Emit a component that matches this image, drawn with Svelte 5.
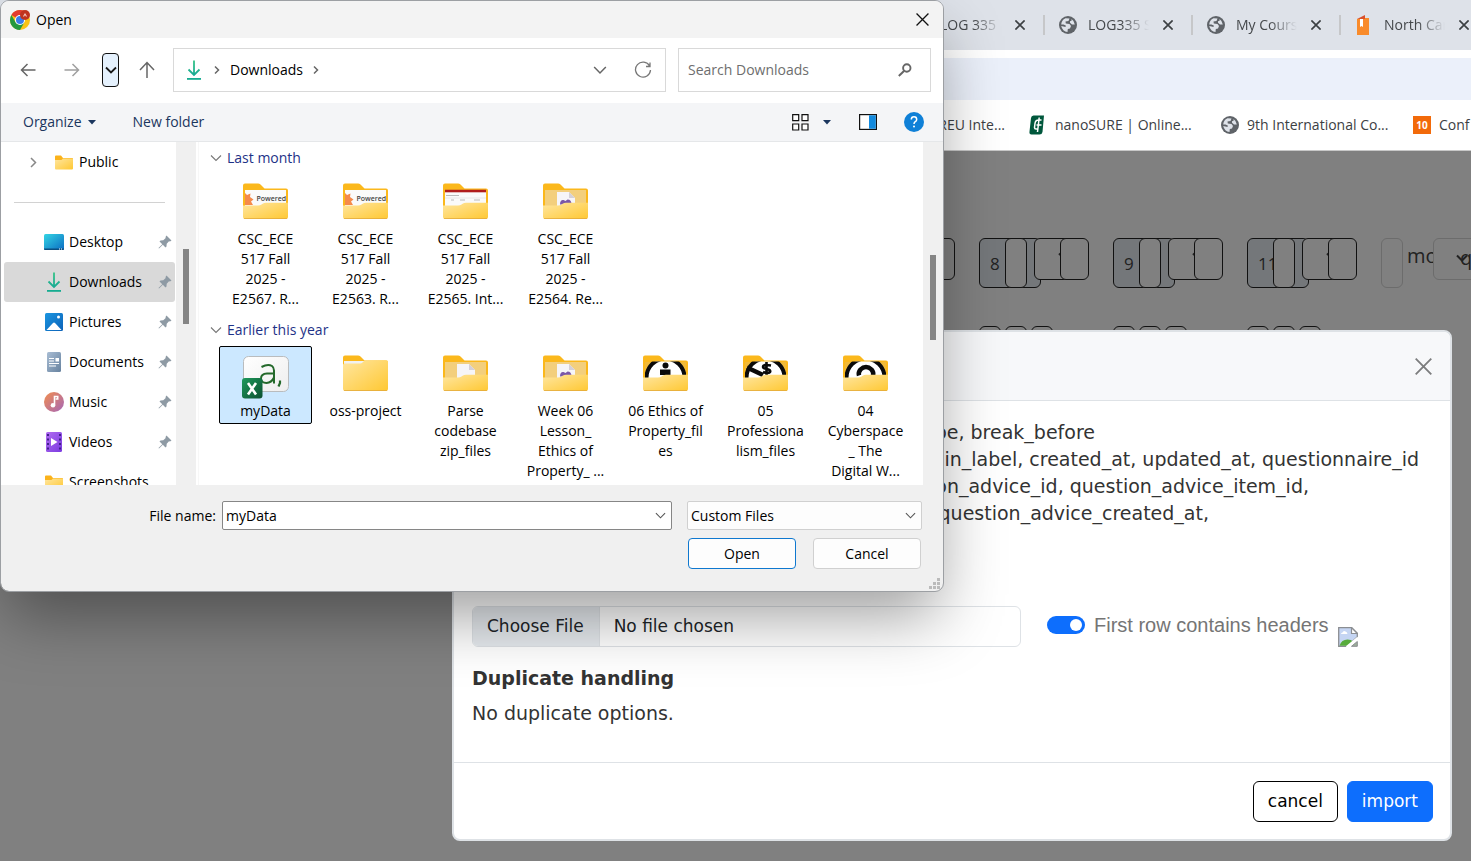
<script>
  const tabs = [
    { icon: '', title: 'LOG 335' },
    { icon: 'globe', title: 'LOG335 S' },
    { icon: 'globe', title: 'My Cours' },
    { icon: 'door', title: 'North Car' },
  ];

  const bookmarks = [
    { icon: '', title: 'REU Inte...' },
    { icon: 'leaf', title: 'nanoSURE | Online...' },
    { icon: 'globe', title: '9th International Co...' },
    { icon: 'ten', title: 'Conf' },
  ];

  const slots = ['', '8', '9', '11'];

  const places = [
    { icon: 'desktop', name: 'Desktop' },
    { icon: 'download', name: 'Downloads', current: true },
    { icon: 'pictures', name: 'Pictures' },
    { icon: 'documents', name: 'Documents' },
    { icon: 'music', name: 'Music' },
    { icon: 'videos', name: 'Videos' },
  ];

  const groups = [
    {
      title: 'Last month',
      files: [
        { kind: 'powered', lines: ['CSC_ECE', '517 Fall', '2025 -', 'E2567. R...'] },
        { kind: 'powered', lines: ['CSC_ECE', '517 Fall', '2025 -', 'E2563. R...'] },
        { kind: 'page', lines: ['CSC_ECE', '517 Fall', '2025 -', 'E2565. Int...'] },
        { kind: 'purple', lines: ['CSC_ECE', '517 Fall', '2025 -', 'E2564. Re...'] },
      ],
    },
    {
      title: 'Earlier this year',
      files: [
        { kind: 'csv', lines: ['myData'], selected: true },
        { kind: 'plain', lines: ['oss-project'] },
        { kind: 'sheet', lines: ['Parse', 'codebase', 'zip_files'] },
        { kind: 'purple', lines: ['Week 06', 'Lesson_', 'Ethics of', 'Property_ ...'] },
        { kind: 'person', lines: ['06 Ethics of', 'Property_fil', 'es'] },
        { kind: 'dollar', lines: ['05', 'Professiona', 'lism_files'] },
        { kind: 'arc', lines: ['04', 'Cyberspace', '_ The', 'Digital W...'] },
      ],
    },
  ];

  let fileName = $state('myData');
  let headers = $state(true);
</script>

{#snippet globe()}
  <svg width="18" height="18" viewBox="0 0 18 18" aria-hidden="true">
    <circle cx="9" cy="9" r="9" fill="#5f6368" />
    <path d="M2.200 8.500Q2.500 4 6.500 2.300L10.500 2.500 9.500 5 6.500 5.500 6.800 7.500 10.500 8 12 10 11 12.500 8.800 13 8.500 16Q3.500 15.500 2.200 10L6.500 11 6.800 9.500 4.500 8.500ZM12.500 3Q15.500 5 15.800 8.600L13 8.500 11 6.800 11 5.300 12.600 4.800Z" fill="#dee2e9" />
  </svg>
{/snippet}

{#snippet favicon(name)}
  {#if name === 'globe'}
    {@render globe()}
  {:else if name === 'door'}
    <svg width="18" height="22" viewBox="0 0 18 22" aria-hidden="true">
      <path d="M2 5 10 1v4z" fill="#d9512c" />
      <path d="M2 5h8V4h4v17H2z" fill="#f98b2b" />
      <path d="M5 5h3v8l-1.500-1L5 13z" fill="#fff" />
    </svg>
  {:else if name === 'leaf'}
    <svg width="18" height="20" viewBox="0 0 18 20" aria-hidden="true">
      <path d="M4.500.5H15L13.500 17Q13 19.500 10.500 19.500H2.500Q0 19.500.5 16.500L2 3Q2.300.5 4.500.5z" fill="#00573c" />
      <path d="M12.500 5H9.500Q6.500 5 6 8.500L5.500 12.500Q5.500 14 7 14H9.500M10.200 2.500 8.500 17M7.500 10H12.500" fill="none" stroke="#fff" stroke-width="1.500" />
    </svg>
  {:else if name === 'ten'}
    <svg width="18" height="18" viewBox="0 0 18 18" aria-hidden="true">
      <rect width="18" height="18" fill="#f26a0a" />
      <text x="9" y="13" text-anchor="middle" font-family="Open Sans, sans-serif" font-size="10" font-weight="700" fill="#fff">10</text>
    </svg>
  {/if}
{/snippet}

{#snippet chevron(size, color, width)}
  <svg width={size} height={size} viewBox="0 0 12 12" aria-hidden="true">
    <path d="M1 3.500 6 8.500 11 3.500" fill="none" stroke={color} stroke-width={width} />
  </svg>
{/snippet}

{#snippet crumb()}
  <svg width="6" height="10" viewBox="0 0 6 10" aria-hidden="true">
    <path d="M1 1.500 4.500 5 1 8.500" fill="none" stroke="#666" stroke-width="1.500" />
  </svg>
{/snippet}

{#snippet cross(size, color, width)}
  <svg width={size} height={size} viewBox="0 0 12 12" aria-hidden="true">
    <path d="M.5.5 11.500 11.500M11.500.5.5 11.500" stroke={color} stroke-width={width} />
  </svg>
{/snippet}

{#snippet place(name)}
  {#if name === 'desktop'}
    <svg width="20" height="20" viewBox="0 0 20 20" aria-hidden="true">
      <rect y="2" width="20" height="16" rx="1.500" fill="url(#desk)" />
      <path d="M0 16.500h20V17q0 1-1 1H1q-1 0-1-1z" fill="#0a4e80" />
      <path d="M15 17h1M17 17h1" stroke="#fff" />
    </svg>
  {:else if name === 'download'}
    <svg width="20" height="20" viewBox="0 0 20 20" aria-hidden="true">
      <path d="M10 .5v14M4.500 9.500l5.500 5.500 5.500-5.500" fill="none" stroke="url(#down)" stroke-width="1.800" />
      <rect x="3" y="18" width="14" height="1.800" fill="#17ac91" />
    </svg>
  {:else if name === 'pictures'}
    <svg width="20" height="20" viewBox="0 0 20 20" aria-hidden="true">
      <rect x="1" y="1" width="18" height="18" rx="1.500" fill="url(#pic)" />
      <path d="M2.500 18 9 11q1-1 2 0l6.500 7z" fill="#fff" />
      <circle cx="14.500" cy="5" r="1.500" fill="#fff" />
    </svg>
  {:else if name === 'documents'}
    <svg width="20" height="20" viewBox="0 0 20 20" aria-hidden="true">
      <rect x="3" width="14" height="20" rx="1.500" fill="url(#docs)" />
      <path d="M5 6.500h5M5 9h5M5 11.500h10M5 14h7" stroke="#fff" stroke-width="1.200" />
      <rect x="11.500" y="6" width="3.500" height="3.500" fill="#fff" />
    </svg>
  {:else if name === 'music'}
    <svg width="20" height="20" viewBox="0 0 20 20" aria-hidden="true">
      <circle cx="10" cy="10" r="10" fill="url(#music)" />
      <circle cx="9" cy="13.200" r="2.300" fill="#fff" />
      <path d="M10.500 13V4.500h3.200V7h-2" fill="none" stroke="#fff" stroke-width="1.600" />
    </svg>
  {:else if name === 'videos'}
    <svg width="20" height="20" viewBox="0 0 20 20" aria-hidden="true">
      <rect x="2" width="16" height="20" rx="1.500" fill="url(#video)" />
      <path d="M4 2v17M16 2v17" stroke="#43208c" stroke-width="2" stroke-dasharray="2 2.500" />
      <path d="M7 6v8l6.500-4z" fill="#fff" />
    </svg>
  {/if}
{/snippet}

{#snippet smallFolder()}
  <svg width="18" height="15" viewBox="0 0 18 15" aria-hidden="true">
    <path d="M0 1.500Q0 .5 1 .5h5l2 2.500h9q1 0 1 1v3H0z" fill="#fbb31b" />
    <path d="M0 5h6.500L8 3.500h9q1 0 1 1V13.500q0 1-1 1H1q-1 0-1-1z" fill="url(#front)" />
  </svg>
{/snippet}

{#snippet fileIcon(kind)}
  {#if kind === 'csv'}
    <svg class="csv" width="48" height="44" viewBox="0 0 48 44" aria-hidden="true">
      <rect x="1.500" y="1.500" width="45" height="35" rx="5" fill="url(#paper)" stroke="#b9bcbe" />
      <path d="M19.500 12Q26 8.500 30 11 32 12.500 32 15.500V28.500M32 18.500H25q-6 .3-6 5 .3 4.500 5.500 4.500 5-.3 7.500-5.500" fill="none" stroke="#24692b" stroke-width="2" />
      <path d="M38 25.500v2.500l-1.500 3.500" fill="none" stroke="#24692b" stroke-width="2.200" />
      <rect x="0" y="23" width="20.500" height="20.500" rx="3" fill="url(#excel)" />
      <path d="M6 28 14 39.500M14 28 6 39.500" stroke="#fff" stroke-width="2.600" />
    </svg>
  {:else if kind === 'plain'}
    <svg width="46" height="36" viewBox="0 0 46 36" aria-hidden="true">
      <path d="M0 2.500Q0 .5 2 .5h13q1.500 0 2.500 1l4 4H43q2 0 2 2V12H0z" fill="#fbb81c" />
      <path d="M1 6h20v4H1z" fill="#f1f1f1" />
      <path d="M0 10q0-1.500 1.500-1.500H17q1.500 0 2.500-1L21 6q.7-.7 2-.7H43.500q1.500 0 1.500 1.500V34q0 2-2 2H2q-2 0-2-2z" fill="url(#front)" />
      <path d="M1 35.600h43" stroke="#dfa63a" stroke-width=".8" />
    </svg>
  {:else}
    <svg width="46" height="36" viewBox="0 0 46 36" aria-hidden="true">
      <path d="M0 2.500Q0 .5 2 .5h13q1.500 0 2.500 1l4 4H43q2 0 2 2V30H0z" fill="#fbb81c" />
      <g clip-path="url(#window)">
        {#if kind === 'powered'}
          <rect x="2" y="7" width="41" height="18" fill="#fafafa" />
          <path d="M2 10l2 2 3.500-1.500L7 14l3.500 2.500L8 18.500 10 22H2z" fill="#f58a4b" />
          <text x="13.500" y="18" font-family="Open Sans, sans-serif" font-size="7" font-weight="600" fill="#444">Powered</text>
        {:else if kind === 'page'}
          <rect x="2" y="7" width="41" height="18" fill="#fafafa" />
          <rect x="2" y="6.500" width="41" height="2.800" fill="#b01c1c" />
          <path d="M3 12.500h13M8 17h3M17 17h5M31 17h6" stroke="#aaa" stroke-width=".8" />
          <path d="M2 15h41" stroke="#ddd" stroke-width=".6" />
        {:else if kind === 'purple' || kind === 'sheet'}
          <rect x="2" y="7" width="41" height="18" fill="#f3cf7d" />
          <path d="M14 9h12l6 6v12H14z" fill="#f6f5f8" />
          <path d="M26 9v6h6z" fill="#d4d0d8" />
          {#if kind === 'purple'}
            <path d="M17 21.500Q17 16.500 20.500 17L22.500 18 24.500 16.500Q28.500 16.500 28.500 21.500z" fill="#7b57a8" />
          {/if}
        {:else}
          <rect x="2" y="7" width="41" height="18" fill="#f0b93a" />
          <circle cx="22.500" cy="22.500" r="19" fill="#fff" stroke="#0a0a0a" stroke-width="4" />
          {#if kind === 'person'}
            <circle cx="22.500" cy="10.500" r="3" fill="#0a0a0a" />
            <path d="M17 14.500h10.500v8h-4.500v-2.500H17z" fill="#0a0a0a" />
          {:else if kind === 'dollar'}
            <path d="M4 12.500 20 20" fill="none" stroke="#0a0a0a" stroke-width="4.500" />
            <path d="M23.500 7v14M28 10.500q-8-1.500-8 1.500 0 1.500 4 2 4 1 3 3-2 2-7 0" fill="none" stroke="#0a0a0a" stroke-width="2.600" />
          {:else}
            <path d="M16 20.500q-1-3 1.500-6 2.500-2.500 5.500-2.500t5.500 2.500q2.500 3 1.500 6" fill="none" stroke="#0a0a0a" stroke-width="4.500" />
          {/if}
        {/if}
      </g>
      <path d="M0 22.500h15q2 0 3.500-1l1.500-1q1-.8 3-.8H45V34q0 2-2 2H2q-2 0-2-2z" fill="url(#front)" />
      <path d="M1 35.600h43" stroke="#dfa63a" stroke-width=".8" />
    </svg>
  {/if}
{/snippet}

<svg class="defs" width="0" height="0" aria-hidden="true">
  <defs>
    <linearGradient id="front" x1="0" y1="0" x2="1" y2="1"><stop offset="0" stop-color="#ffe6a0" /><stop offset="1" stop-color="#ffc832" /></linearGradient>
    <linearGradient id="desk" x1="0" y1="0" x2="1" y2="1"><stop offset="0" stop-color="#34d5e4" /><stop offset="1" stop-color="#0b6cc2" /></linearGradient>
    <linearGradient id="down" gradientUnits="userSpaceOnUse" x1="0" y1="0" x2="0" y2="18"><stop offset="0" stop-color="#36c486" /><stop offset="1" stop-color="#12a596" /></linearGradient>
    <linearGradient id="pic" x1="0" y1="0" x2="1" y2="1"><stop offset="0" stop-color="#1b95e0" /><stop offset="1" stop-color="#0c62b8" /></linearGradient>
    <linearGradient id="docs" x1="0" y1="0" x2="1" y2="1"><stop offset="0" stop-color="#a9bdd4" /><stop offset="1" stop-color="#67829f" /></linearGradient>
    <linearGradient id="music" x1="0" y1="0" x2="1" y2="1"><stop offset="0" stop-color="#f28e4e" /><stop offset="1" stop-color="#a566b8" /></linearGradient>
    <linearGradient id="video" x1="0" y1="0" x2="1" y2="1"><stop offset="0" stop-color="#b06cf0" /><stop offset="1" stop-color="#7b3be0" /></linearGradient>
    <linearGradient id="paper" x1="0" y1="0" x2="1" y2="1"><stop offset="0" stop-color="#fff" /><stop offset="1" stop-color="#eeeeee" /></linearGradient>
    <linearGradient id="excel" x1="0" y1="0" x2="1" y2="1"><stop offset="0" stop-color="#1e9a5c" /><stop offset="1" stop-color="#0c5030" /></linearGradient>
    <clipPath id="window"><rect x="2" y="6.500" width="41" height="18" /></clipPath>
  </defs>
</svg>

<main class="desktop">
  <div class="browser">
    <div class="tabs">
      {#each tabs as tab}
        <div class="tab">
          <span class="favicon">{@render favicon(tab.icon)}</span>
          <span class="tab-title">{tab.title}</span>
          <button class="bare" aria-label="Close tab">{@render cross(10, '#3c4043', 2)}</button>
        </div>
      {/each}
    </div>
    <div class="address"></div>
    <nav class="bookmarks">
      {#each bookmarks as mark}
        <a class="bookmark" class:end={!mark.icon} href="#top">
          {@render favicon(mark.icon)}
          <span>{mark.title}</span>
        </a>
      {/each}
    </nav>
    <div class="page">
      <div class="slots">
        {#each slots as slot}
          <div class="slot">
            <span class="box number">{slot}</span>
            <span class="box narrow"></span>
            <span class="box pick">{@render chevron(12, '#222', 2)}</span>
            <span class="box last"></span>
          </div>
        {/each}
        <div class="slot faint">
          <span class="box lone"></span>
          <span class="word">mo</span>
          <span class="box wide">{@render chevron(12, '#222', 2)}<span>q</span></span>
        </div>
      </div>
      <div class="slots">
        {#each slots as slot}
          <div class="slot low">
            <span class="box small"></span>
            <span class="box small"></span>
            <span class="box small"></span>
          </div>
        {/each}
      </div>
    </div>
  </div>

  <section class="modal" role="dialog" aria-label="import">
    <header class="modal-head">
      <button class="bare" aria-label="Close">{@render cross(17, '#7c7d7e', 1.3)}</button>
    </header>
    <div class="modal-body">
      <div class="fields">
        <p class="field-a">type, break_before</p>
        <p class="field-b">min_label, created_at, updated_at, questionnaire_id</p>
        <p class="field-c">question_advice_id, question_advice_item_id,</p>
        <p class="field-d">question_advice_created_at,</p>
      </div>
      <div class="upload">
        <input class="file" type="file" aria-label="Choose File" />
        <label class="switch">
          <input type="checkbox" bind:checked={headers} />
          <span>First row contains headers</span>
        </label>
        <svg class="broken" width="20" height="20" viewBox="0 0 20 20" aria-hidden="true">
          <path d="M.7.7h13l5.600 5.600V10L9 19.300H.7z" fill="#c5d5f3" stroke="#8b8e92" stroke-width="1.300" />
          <path d="M13.500 .7V6.500h5.800z" fill="#fff" stroke="#8b8e92" stroke-width="1.200" />
          <path d="M3 7q0-1.500 1.500-1.500Q5.500 3 7.500 4.500 9 4.500 9.500 7z" fill="#fff" />
          <path d="M1.500 18.700q2-6.200 8-6.200 4 0 5.500 2L9 18.700z" fill="#57ab3b" />
          <path d="M8.500 20 20 10.500" stroke="#fff" stroke-width="2" />
          <path d="M13.500 19.300 19.300 14.500v4.800z" fill="#9cae9a" stroke="#8b8e92" />
        </svg>
      </div>
      <h2>Duplicate handling</h2>
      <p>No duplicate options.</p>
    </div>
    <footer class="modal-foot">
      <button class="btn">cancel</button>
      <button class="btn primary">import</button>
    </footer>
  </section>

  <section class="dialog" role="dialog" aria-label="Open">
    <header class="title">
      <svg width="20" height="20" viewBox="0 0 20 20" aria-hidden="true">
        <circle cx="10" cy="10" r="10" fill="#f9c315" />
        <path d="M10 10 1.340 5A10 10 0 0 1 18.660 5z" fill="#e33b2e" />
        <path d="M10 10 5.700 12.500 1.340 5A10 10 0 0 0 10 20L14.300 12.500z" fill="#25993f" />
        <circle cx="10" cy="10" r="5" fill="#fff" />
        <circle cx="10" cy="10" r="4" fill="#3b7de8" />
        <circle cx="15" cy="5" r="5" fill="#c0341d" />
        <path d="M13.500 6.500 15 4l1.500 2.500" fill="none" stroke="#f3c9c2" stroke-width="1.100" />
      </svg>
      <span>Open</span>
      <button class="bare" aria-label="Close">{@render cross(13, '#111', 1.2)}</button>
    </header>

    <div class="nav">
      <button class="bare" aria-label="Back">
        <svg width="16" height="16" viewBox="0 0 16 16"><path d="M15.500 8H1.500M7.500 2 1.500 8l6 6" fill="none" stroke="#666" stroke-width="1.500" /></svg>
      </button>
      <button class="bare" aria-label="Forward">
        <svg width="16" height="16" viewBox="0 0 16 16"><path d="M.5 8h14M8.500 2l6 6-6 6" fill="none" stroke="#a0a0a0" stroke-width="1.500" /></svg>
      </button>
      <button class="recent" aria-label="Recent locations">{@render chevron(12, '#1a1a1a', 1.8)}</button>
      <button class="bare up" aria-label="Up">
        <svg width="16" height="18" viewBox="0 0 16 18"><path d="M8 17V2M1 9l7-7.500L15 9" fill="none" stroke="#666" stroke-width="1.500" /></svg>
      </button>
      <div class="path">
        {@render place('download')}
        {@render crumb()}
        <span>Downloads</span>
        {@render crumb()}
        <span class="fill"></span>
        <button class="bare" aria-label="Previous locations">{@render chevron(14, '#666', 1.3)}</button>
        <button class="bare refresh" aria-label="Refresh">
          <svg width="18" height="18" viewBox="0 0 18 18"><path d="M15.600 5A7.500 7.500 0 1 0 16.500 9M16 1.500V5.500H12" fill="none" stroke="#777" stroke-width="1.300" /></svg>
        </button>
      </div>
      <div class="search">
        <input type="search" placeholder="Search Downloads" aria-label="Search Downloads" />
        <svg width="14" height="14" viewBox="0 0 14 14" aria-hidden="true"><circle cx="8.800" cy="5" r="3.700" fill="none" stroke="#666" stroke-width="1.900" /><path d="M6 8 .8 13" stroke="#666" stroke-width="2" /></svg>
      </div>
    </div>

    <div class="tools">
      <button class="bare organize">Organize <svg width="8" height="5" viewBox="0 0 8 5" aria-hidden="true"><path d="M0 0h8L4 4.500z" fill="#1b365e" /></svg></button>
      <button class="bare">New folder</button>
      <span class="fill"></span>
      <button class="bare" aria-label="View">
        <svg width="17" height="17" viewBox="0 0 17 17"><path d="M.7.7h6v6h-6zM10 .7h6v6h-6zM.7 10h6v6h-6zM10 10h6v6h-6z" fill="#fff" stroke="#111" stroke-width="1.200" /></svg>
      </button>
      <button class="bare arrow" aria-label="View options"><svg width="8" height="5" viewBox="0 0 8 5"><path d="M0 0h8L4 4.500z" fill="#1b365e" /></svg></button>
      <button class="bare pane" aria-label="Preview pane">
        <svg width="18" height="16" viewBox="0 0 18 16"><rect x=".6" y=".6" width="16.800" height="14.800" fill="#fff" stroke="#111" stroke-width="1.200" /><path d="M10 1.200h6.800v13.600H10z" fill="#128ade" /></svg>
      </button>
      <button class="bare" aria-label="Help">
        <svg width="20" height="20" viewBox="0 0 20 20"><circle cx="10" cy="10" r="10" fill="#0f80d7" /><path d="M7.300 7.500Q7.300 4.800 10 4.800T12.700 7.400Q12.700 8.800 11 9.800 10 10.500 10 12" fill="none" stroke="#fff" stroke-width="1.500" /><circle cx="10" cy="14.500" r="1" fill="#fff" /></svg>
      </button>
    </div>

    <div class="content">
      <div class="side">
        <div class="side-row tree">
          <svg width="7" height="11" viewBox="0 0 7 11" aria-hidden="true"><path d="M1 1 5.500 5.500 1 10" fill="none" stroke="#888" stroke-width="1.500" /></svg>
          {@render smallFolder()}
          <span>Public</span>
        </div>
        <div class="side-row divider"><hr /></div>
        {#each places as item}
          <div class="side-row" class:current={item.current}>
            {@render place(item.icon)}
            <span class="fill">{item.name}</span>
            <svg width="14" height="14" viewBox="0 0 14 14" aria-hidden="true"><path d="M8.500.5 13.500 5.500 12 6.500 11 6.300 8.700 8.700 8.500 11.500 7.500 12.500 4.800 9.700 1 13.500.5 13 4.300 9.200 1.500 6.500 2.500 5.500 5.300 5.300 7.700 3 7.500 2z" fill="#8e9aa4" /></svg>
          </div>
        {/each}
        <div class="side-row shots">{@render smallFolder()}<span>Screenshots</span></div>
      </div>
      <div class="bar side-bar"><span></span></div>
      <div class="files">
        {#each groups as group}
          <h3>{@render chevron(12, '#777', 1.1)}{group.title}</h3>
          <div class="grid">
            {#each group.files as file}
              <button class="tile" class:selected={file.selected}>
                <span class="pic">{@render fileIcon(file.kind)}</span>
                {#each file.lines as line}<span class="line">{line}</span>{/each}
              </button>
            {/each}
          </div>
        {/each}
      </div>
      <div class="bar file-bar"><span></span></div>
    </div>

    <footer class="foot">
      <div class="name">
        <label for="file-name">File name:</label>
        <div class="combo">
          <input id="file-name" bind:value={fileName} />
          {@render chevron(11, '#555', 1.2)}
        </div>
      </div>
      <div class="combo type">
        <select aria-label="File type"><option>Custom Files</option></select>
        {@render chevron(11, '#555', 1.2)}
      </div>
      <div class="actions">
        <button class="action default">Open</button>
        <button class="action">Cancel</button>
      </div>
      <svg class="grip" width="11" height="11" viewBox="0 0 11 11" aria-hidden="true"><path d="M8 0h3v3H8zM4 4h3v3H4zM8 4h3v3H8zM0 8h3v3H0zM4 8h3v3H4zM8 8h3v3H8z" fill="#bbb" /></svg>
    </footer>
  </section>
</main>

<style>
  :global(body) {
    margin: 0;
    background: #808080;
  }
  * {
    box-sizing: border-box;
  }
  p, h2, h3, hr {
    margin: 0;
  }
  svg {
    display: block;
    flex: none;
  }
  button, input, select {
    font: inherit;
    color: inherit;
  }
  .defs {
    position: absolute;
  }
  .desktop {
    position: relative;
    min-height: 100vh;
    overflow: hidden;
    font: 14px/20px "Open Sans", sans-serif;
    color: #000;
  }
  .bare {
    display: flex;
    align-items: center;
    padding: 0;
    border: 0;
    background: none;
  }
  .fill {
    flex: 1;
  }

  /* browser behind the windows */
  .browser {
    overflow: hidden;
    background: #fff;
  }
  .tabs {
    display: flex;
    height: 50px;
    padding-left: 897px;
    background: #dee2e9;
    color: #45484b;
  }
  .tab {
    flex: none;
    display: flex;
    align-items: center;
    width: 148px;
    padding-left: 14px;
  }
  .tab::after {
    content: "";
    width: 2px;
    height: 20px;
    margin-left: auto;
    background: #c6c7c9;
  }
  .favicon {
    width: 18px;
    margin-right: 11px;
  }
  .tab-title {
    width: 61px;
    margin-right: 14px;
    overflow: hidden;
    white-space: nowrap;
    mask-image: linear-gradient(90deg, #000 55%, transparent 100%);
  }
  .address {
    height: 42px;
    margin-top: 8px;
    background: #ebf0fa;
  }
  .bookmarks {
    display: flex;
    gap: 24px;
    height: 51px;
    padding-left: 837px;
    border-bottom: 1px solid #c8c8c8;
  }
  .bookmark {
    flex: none;
    display: flex;
    align-items: center;
    gap: 8px;
    width: 168px;
    color: #3c4043;
    text-decoration: none;
    white-space: nowrap;
  }
  .bookmark.end {
    justify-content: flex-end;
  }
  .page {
    min-height: calc(100vh - 151px);
    padding: 87px 0 0 845px;
    background: #808080;
  }
  .slots {
    display: flex;
    height: 88px;
  }
  .slot {
    flex: none;
    display: flex;
    align-items: flex-start;
    width: 134px;
    font-size: 17px;
    color: #222;
  }
  .box {
    flex: none;
    display: flex;
    align-items: center;
    height: 42px;
    border: 1px solid #111;
    border-radius: 6px;
    background: #808080;
  }
  .number {
    width: 62px;
    height: 50px;
    padding: 2px 0 0 10px;
    background: #74777a;
  }
  .narrow {
    width: 22px;
    height: 50px;
    margin-left: -36px;
  }
  .pick {
    width: 40px;
    margin-left: 7px;
    padding: 0 0 6px 23px;
  }
  .last {
    width: 29px;
    margin-left: -14px;
  }
  .low {
    gap: 4px;
  }
  .small, .lone {
    width: 22px;
    height: 50px;
  }
  .faint .box {
    border-color: #6c6c6c;
  }
  .word {
    width: 26px;
    margin-left: 4px;
    padding-top: 6px;
    overflow: hidden;
    font-size: 20px;
    line-height: 24px;
  }
  .wide {
    width: 70px;
    padding: 0 0 2px 22px;
    font-size: 20px;
  }
  .wide span {
    margin-left: -8px;
  }

  /* import window */
  .modal {
    position: absolute;
    top: 330px;
    right: 19px;
    width: 1000px;
    max-width: 100%;
    border: 2px solid #dee2e6;
    border-radius: 8px;
    background: #fff;
    font: 19px/27px "DejaVu Sans", sans-serif;
    color: #333;
    overflow: hidden;
  }
  .modal-head {
    display: flex;
    align-items: center;
    justify-content: flex-end;
    height: 69px;
    padding-right: 18px;
    border-bottom: 1px solid #dee2e6;
    background: #f7f8fa;
  }
  .modal-body {
    padding: 18px 18px 35px;
  }
  .fields {
    padding-bottom: 79px;
    text-align: right;
  }
  .field-a {
    padding-right: 337px;
  }
  .field-b {
    padding-right: 13px;
  }
  .field-c {
    padding-right: 123px;
  }
  .field-d {
    padding-right: 223px;
  }
  .upload {
    display: flex;
    align-items: center;
    height: 41px;
    margin-bottom: 18px;
  }
  .file {
    flex: none;
    width: 549px;
    height: 41px;
    border: 1px solid #dee2e6;
    border-radius: 6px;
    font-size: 17px;
    line-height: 39px;
    color: #212529;
    overflow: hidden;
  }
  .file::file-selector-button {
    height: 39px;
    margin-right: 14px;
    padding: 0 15px 0 14px;
    border: 0;
    border-right: 1px solid #dee2e6;
    background: #e6eaee;
    font: inherit;
    color: inherit;
  }
  .switch {
    display: flex;
    align-items: center;
    gap: 9px;
    margin-left: 26px;
    padding-bottom: 3px;
    font: 20px/24px "Liberation Sans", sans-serif;
    color: #757575;
    white-space: nowrap;
  }
  .switch input {
    display: flex;
    justify-content: flex-end;
    align-items: center;
    appearance: none;
    width: 38px;
    height: 18px;
    margin: 0;
    padding: 0 3px;
    border-radius: 9px;
    background: #0d6efd;
  }
  .switch input::after {
    content: "";
    width: 12px;
    height: 12px;
    border-radius: 6px;
    background: #fff;
  }
  .broken {
    align-self: flex-end;
    margin-left: 9px;
  }
  .modal h2 {
    margin-bottom: 8px;
    font-size: 19px;
    line-height: 27px;
  }
  .modal-foot {
    display: flex;
    justify-content: flex-end;
    gap: 9px;
    padding: 18px 17px 17px;
    border-top: 1px solid #dee2e6;
  }
  .btn {
    height: 41px;
    padding: 0 14px;
    border: 1px solid #000;
    border-radius: 6px;
    background: #fff;
    font-size: 17px;
    color: #000;
  }
  .primary {
    border-color: #0d6efd;
    background: #0d6efd;
    color: #fff;
  }

  /* file picker window */
  .dialog {
    position: absolute;
    top: 0;
    left: 0;
    width: 944px;
    max-width: 100%;
    border: 1px solid #9c9fa3;
    border-radius: 9px;
    background: #f0f0f0;
    background-clip: padding-box;
    box-shadow: 0 30px 64px -6px rgba(0, 0, 0, 0.38);
    overflow: hidden;
  }
  .title {
    display: flex;
    align-items: center;
    gap: 6px;
    height: 37px;
    padding: 0 14px 0 9px;
    background: #f3f3f3;
  }
  .title .bare {
    margin-left: auto;
  }
  .nav {
    display: flex;
    align-items: center;
    height: 65px;
    padding: 0 12px 2px 19px;
    gap: 28px;
    background: #fff;
  }
  .recent {
    display: flex;
    align-items: center;
    justify-content: center;
    width: 17px;
    height: 34px;
    margin: 0 -8px 0 -6px;
    padding: 0;
    border: 1px solid #111;
    border-radius: 4px;
    background: #e5f1fd;
  }
  .up {
    margin-right: -10px;
  }
  .path, .search {
    display: flex;
    align-items: center;
    height: 44px;
    border: 1px solid #d9d9d9;
  }
  .path {
    flex: 1;
    gap: 10px;
    margin-right: -16px;
    padding: 0 13px 0 10px;
  }
  .refresh {
    margin-left: 17px;
  }
  .search {
    width: 253px;
    padding: 0 18px 0 9px;
  }
  .search input, .combo input {
    flex: 1;
    min-width: 0;
    padding: 0;
    border: 0;
    outline: 0;
    background: none;
  }
  .search input::placeholder {
    color: #6e6e6e;
    opacity: 1;
  }
  .tools {
    display: flex;
    align-items: center;
    height: 39px;
    padding: 0 19px 0 22px;
    border-bottom: 1px solid #e5e7e9;
    background: #f4f5f7;
    color: #1b365e;
  }
  .organize {
    gap: 6px;
    margin-right: 37px;
  }
  .arrow {
    margin: 0 28px 0 14px;
  }
  .pane {
    margin-right: 27px;
  }
  .content {
    display: flex;
    height: 343px;
    background: #fff;
  }
  .side {
    width: 175px;
    overflow: hidden;
  }
  .side-row {
    display: flex;
    align-items: center;
    gap: 5px;
    height: 40px;
    margin: 0 1px 0 3px;
    padding: 0 3px 0 40px;
    border-radius: 3px;
  }
  .tree {
    gap: 6px;
    padding-left: 26px;
  }
  .tree svg:first-child {
    margin-right: 12px;
  }
  .divider {
    padding: 0 10px;
  }
  .divider hr {
    width: 100%;
    border: 0;
    border-top: 1px solid #d2d2d2;
  }
  .current {
    background: #d9d9d9;
  }
  .shots {
    padding-left: 41px;
    gap: 6px;
  }
  .bar {
    flex: none;
    width: 20px;
    padding-left: 7px;
    background: #f0f0f0;
  }
  .bar span {
    display: block;
    width: 6px;
    height: 75px;
    background: #858585;
  }
  .side-bar {
    padding-top: 107px;
  }
  .file-bar {
    padding-top: 113px;
  }
  .file-bar span {
    height: 85px;
  }
  .files {
    flex: 1;
    min-width: 0;
    margin-left: 2px;
    padding: 6px 0 0 11px;
    border-left: 1px solid #f7f7f7;
    overflow: hidden;
  }
  h3 {
    display: flex;
    align-items: center;
    gap: 5px;
    margin-bottom: 6px;
    font: inherit;
    color: #1e3287;
  }
  .grid {
    display: grid;
    grid-template-columns: repeat(auto-fill, 93px);
    gap: 7px;
    padding-left: 9px;
    margin-bottom: 8px;
  }
  .tile {
    display: flex;
    flex-direction: column;
    align-items: center;
    align-self: start;
    padding: 8px 0 2px;
    border: 1px solid transparent;
    border-radius: 2px;
    background: none;
    white-space: nowrap;
  }
  .tile.selected {
    border-color: #000;
    background: #cce8ff;
  }
  .pic {
    height: 46px;
  }
  .foot {
    position: relative;
    display: grid;
    grid-template-columns: 1fr 235px;
    gap: 8px 15px;
    padding: 16px 21px 22px;
  }
  .name {
    display: flex;
    align-items: center;
    justify-content: flex-end;
    gap: 6px;
  }
  .combo {
    display: flex;
    align-items: center;
    width: 450px;
    height: 29px;
    padding: 0 5px 0 3px;
    border: 1px solid #868686;
    border-radius: 2px;
    background: #fff;
  }
  .type {
    width: auto;
    border-color: #d0d0d0;
    background: #fdfdfd;
  }
  .type select {
    flex: 1;
    padding: 0;
    border: 0;
    appearance: none;
    background: none;
  }
  .actions {
    grid-column: 1 / -1;
    display: flex;
    justify-content: flex-end;
    gap: 17px;
    padding-right: 1px;
  }
  .action {
    width: 108px;
    height: 31px;
    border: 1px solid #d0d0d0;
    border-radius: 4px;
    background: #fdfdfd;
  }
  .default {
    border-color: #0f78cf;
  }
  .grip {
    position: absolute;
    right: 3px;
    bottom: 2px;
  }
</style>
